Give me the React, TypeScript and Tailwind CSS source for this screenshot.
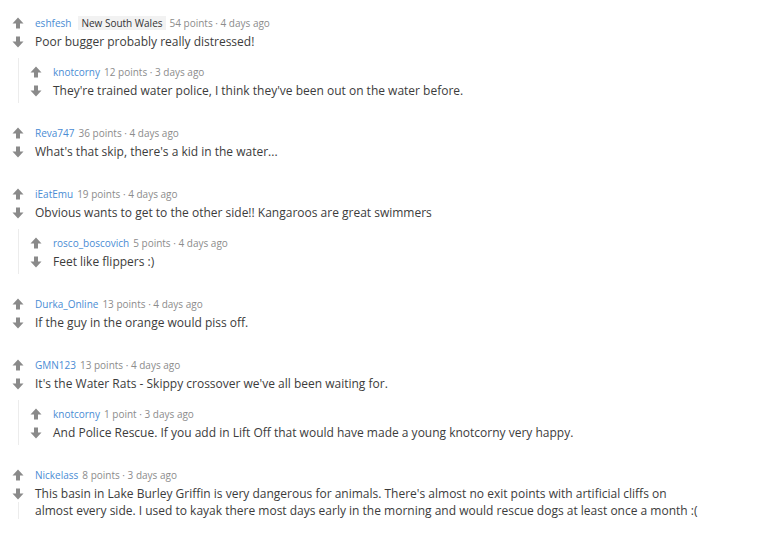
import React from "react";

type Reply = {
  user: string;
  flair?: string;
  points: string;
  age: string;
  body: string;
  children?: Reply[];
};

const comments: Reply[] = [
  {
    user: "eshfesh",
    flair: "New South Wales",
    points: "54 points",
    age: "4 days ago",
    body: "Poor bugger probably really distressed!",
    children: [
      {
        user: "knotcorny",
        points: "12 points",
        age: "3 days ago",
        body: "They're trained water police, I think they've been out on the water before.",
      },
    ],
  },
  {
    user: "Reva747",
    points: "36 points",
    age: "4 days ago",
    body: "What's that skip, there's a kid in the water...",
  },
  {
    user: "iEatEmu",
    points: "19 points",
    age: "4 days ago",
    body: "Obvious wants to get to the other side!! Kangaroos are great swimmers",
    children: [
      {
        user: "rosco_boscovich",
        points: "5 points",
        age: "4 days ago",
        body: "Feet like flippers :)",
      },
    ],
  },
  {
    user: "Durka_Online",
    points: "13 points",
    age: "4 days ago",
    body: "If the guy in the orange would piss off.",
  },
  {
    user: "GMN123",
    points: "13 points",
    age: "4 days ago",
    body: "It's the Water Rats - Skippy crossover we've all been waiting for.",
    children: [
      {
        user: "knotcorny",
        points: "1 point",
        age: "3 days ago",
        body: "And Police Rescue. If you add in Lift Off that would have made a young knotcorny very happy.",
      },
    ],
  },
  {
    user: "Nickelass",
    points: "8 points",
    age: "3 days ago",
    body: "This basin in Lake Burley Griffin is very dangerous for animals. There's almost no exit points with artificial cliffs on almost every side. I used to kayak there most days early in the morning and would rescue dogs at least once a month :(",
  },
];

const Arrow = ({ down }: { down?: boolean }) => (
  <svg width="12" height="12" viewBox="0 0 12 12" className={down ? "rotate-180" : ""}>
    <path d="M6 0.5 L11.5 6.5 L8 6.5 L8 11.5 L4 11.5 L4 6.5 L0.5 6.5 Z" fill="#8a8a8a" />
  </svg>
);

const Comment = ({ c }: { c: Reply }) => {
  return (
    <div>
      <div className="flex">
        <div className="w-[20px] flex flex-col items-center shrink-0">
          <div className="h-[20px] flex items-center">
            <Arrow />
          </div>
          <div className="h-[17px] flex items-center">
            <Arrow down />
          </div>
          <div className="flex-1 w-px bg-[#ececec]" />
        </div>
        <div className="ml-[7px] max-w-[668px]">
          <div className="h-[20px] flex items-center gap-[4px] text-[10px] text-[#8c8c8c]">
            <span className="text-[#4a8cd4]">{c.user}</span>
            {c.flair && (
              <span className="bg-[#f2f2f2] text-[#333] px-[3px] leading-[14px] ml-[3px]">{c.flair}</span>
            )}
            <span>
              {c.points} · {c.age}
            </span>
          </div>
          <p className="text-[12px] leading-[17px] text-[#3c3c3c]">{c.body}</p>
        </div>
      </div>
      {c.children && (
        <div className="mt-2 ml-[10px] border-l border-[#ececec] pl-[7px] pt-1 pb-1 -mb-1">
          {c.children.map((r, i) => (
            <Comment key={`reply-${i}`} c={r} />
          ))}
        </div>
      )}
    </div>
  );
};

const App = () => {
  return (
    <div
      className="w-[759px] h-[544px] bg-white overflow-hidden pt-[13px] pl-2 flex flex-col gap-[24px]"
      style={{ fontFamily: '"Open Sans", "Liberation Sans", sans-serif' }}
    >
      {comments.map((c, i) => (
        <Comment key={`comment-${i}`} c={c} />
      ))}
    </div>
  );
};

export default App;
